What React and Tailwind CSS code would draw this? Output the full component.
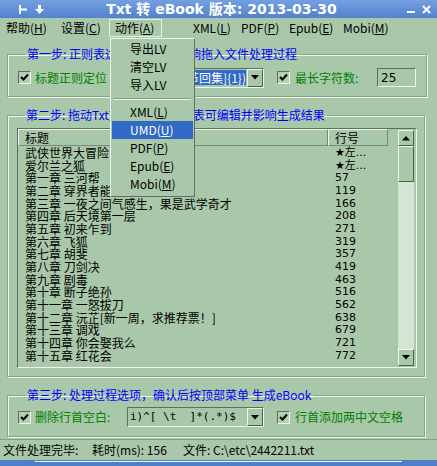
import React from 'react'

const rows = [
    ['武侠世界大冒险', '★左...'],
    ['爱尔兰之狐', '★左...'],
    ['第一章 三河帮', '57'],
    ['第二章 穿界者能力', '119'],
    ['第三章 一夜之间气感生，果是武学奇才', '166'],
    ['第四章 后天境第一层', '208'],
    ['第五章 初来乍到', '271'],
    ['第六章 飞狐', '319'],
    ['第七章 胡斐', '357'],
    ['第八章 刀剑决', '419'],
    ['第九章 剧毒', '463'],
    ['第十章 断子绝孙', '516'],
    ['第十一章 一怒拔刀', '562'],
    ['第十二章 沅芷[新一周，求推荐票！]', '638'],
    ['第十三章 调戏', '679'],
    ['第十四章 你会娶我么', '721'],
    ['第十五章 红花会', '772'],
]

const Check = () => (
    <div className="w-[13px] h-[13px] shrink-0 border border-t-[#5f6f5f] border-l-[#5f6f5f] border-b-[#eef6ee] border-r-[#eef6ee] bg-[#b4cfb4] flex items-center justify-center">
        <svg width="9" height="9" viewBox="0 0 9 9">
            <path d="M1 4 L3.5 6.5 L8 1.5" stroke="#000" strokeWidth="2" fill="none" />
        </svg>
    </div>
)

const DropButton = () => (
    <div className="w-[16px] h-full shrink-0 border border-t-[#eef6ee] border-l-[#eef6ee] border-b-[#4f5f4f] border-r-[#4f5f4f] bg-[#a9c8a9] flex items-center justify-center">
        <svg width="8" height="5" viewBox="0 0 8 5"><path d="M0 0 H8 L4 4.5 Z" fill="#000" /></svg>
    </div>
)

const groupCls = "mx-[7px] w-[418px] border border-[#86a686] shadow-[1px_1px_0_#eef6ee,inset_1px_1px_0_#eef6ee]"
const legendCls = "ml-[7px] px-[2px] text-[#0000ff] leading-[14px]"

const App = () => {
    return (
        <div className="w-[437px] h-[466px] bg-[#a9c8a9] flex flex-col relative overflow-hidden text-[12px] text-black font-['Noto_Sans_CJK_SC',sans-serif]">
            {/* title bar */}
            <div className="h-[18px] shrink-0 flex items-center bg-gradient-to-b from-[#74a0e0] to-[#5282cc] text-white">
                <div className="w-[60px] flex items-center gap-[7px] pl-[19px]">
                    <svg width="9" height="9" viewBox="0 0 9 9"><path d="M1 0 V9 M1 4.5 H8" stroke="#fff" strokeWidth="2" /></svg>
                    <svg width="9" height="9" viewBox="0 0 9 9"><path d="M3 0 H6 V4 H9 L4.5 9 L0 4 H3 Z" fill="#fff" /></svg>
                </div>
                <div className="flex-1 text-center pl-[6px] font-bold text-[14px] leading-[18px] font-['DejaVu_Sans','Noto_Sans_CJK_SC',sans-serif]">Txt 转 eBook 版本: 2013-03-30</div>
                <div className="w-[60px] flex items-center justify-end gap-[7px] pr-[6px]">
                    <div className="w-[8px] h-[2px] bg-white mt-[6px]" />
                    <svg width="9" height="9" viewBox="0 0 9 9"><path d="M1 1 L8 8 M8 1 L1 8" stroke="#fff" strokeWidth="2" /></svg>
                </div>
            </div>

            {/* menu bar */}
            <div className="h-[20px] shrink-0 flex items-center pl-[6px] leading-[16px]">
                <span className="w-[55px]">帮助(<u>H</u>)</span>
                <span className="w-[48px]">设置(<u>C</u>)</span>
                <span className="w-[53px] h-[18px] pl-[5px] border border-[#e4eee4] flex items-center">动作(<u>A</u>)</span>
                <span className="w-[31px]" />
                <span className="w-[48px]">XML(<u>L</u>)</span>
                <span className="w-[48px]">PDF(<u>P</u>)</span>
                <span className="w-[54px]">Epub(<u>E</u>)</span>
                <span>Mobi(<u>M</u>)</span>
            </div>

            {/* step 1 */}
            <fieldset className={groupCls + " mt-[9px] px-[10px] pt-[7px] pb-[9px]"}>
                <legend className={legendCls}>第一步: 正则表达式，设置将影响拖入文件处理过程</legend>
                <div className="h-[19px] flex items-center">
                    <Check />
                    <span className="ml-[4px] w-[92px] text-[#008000]">标题正则定位</span>
                    <div className="w-[137px] h-[20px] flex border border-t-[#5f6f5f] border-l-[#5f6f5f] border-b-[#eef6ee] border-r-[#eef6ee]">
                        <div className="flex-1 overflow-hidden flex justify-end items-center pr-[1px]">
                            <span className="bg-[#316ac5] text-white whitespace-nowrap leading-[15px]">^(第.{"{1,5}"}[章节回集]{"{1}"})</span>
                        </div>
                        <DropButton />
                    </div>
                    <div className="ml-[13px]"><Check /></div>
                    <span className="ml-[5px] w-[82px] text-[#008000]">最长字符数:</span>
                    <div className="w-[39px] h-[19px] pl-[3px] flex items-center border border-t-[#5f6f5f] border-l-[#5f6f5f] border-b-[#eef6ee] border-r-[#eef6ee] font-['DejaVu_Sans',sans-serif]">25</div>
                </div>
            </fieldset>

            {/* step 2 */}
            <fieldset className={groupCls + " mt-[11px] pl-[9px] pr-[7px] pt-[6px] pb-[8px]"}>
                <legend className={legendCls}>第二步: 拖动Txt文件到列表，列表可编辑并影响生成结果</legend>
                <div className="h-[240px] flex border border-t-[#5f6f5f] border-l-[#5f6f5f] border-b-[#eef6ee] border-r-[#eef6ee]">
                    <div className="w-[370px] flex flex-col">
                        <div className="h-[17px] flex leading-[15px]">
                            <div className="w-[310px] pl-[6px] border border-t-[#eef6ee] border-l-[#eef6ee] border-b-[#6f8f6f] border-r-[#6f8f6f]">标题</div>
                            <div className="flex-1 pl-[6px] border border-t-[#eef6ee] border-l-[#eef6ee] border-b-[#6f8f6f] border-r-[#6f8f6f]">行号</div>
                        </div>
                        <div className="flex flex-col">
                            {rows.map(([t, n]) => (
                                <div key={t} className="h-[12.7px] flex items-center leading-[13px] whitespace-nowrap">
                                    <div className="w-[310px] pl-[7px]">{t}</div>
                                    <div className="pl-[7px] font-['DejaVu_Sans','Noto_Sans_CJK_SC',sans-serif] text-[11px]">{n}</div>
                                </div>
                            ))}
                        </div>
                    </div>
                    <div className="flex-1" />
                    <div className="w-[16px] mr-[2px] my-[1px] flex flex-col">
                        <div className="h-[16px] border border-t-[#eef6ee] border-l-[#eef6ee] border-b-[#4f5f4f] border-r-[#4f5f4f] flex items-center justify-center">
                            <svg width="8" height="5" viewBox="0 0 8 5"><path d="M0 4.5 H8 L4 0 Z" fill="#000" /></svg>
                        </div>
                        <div className="h-[36px] border border-t-[#eef6ee] border-l-[#eef6ee] border-b-[#4f5f4f] border-r-[#4f5f4f]" />
                        <div className="flex-1 bg-[#d6e4d6]" />
                        <div className="h-[17px] border border-t-[#eef6ee] border-l-[#eef6ee] border-b-[#4f5f4f] border-r-[#4f5f4f] flex items-center justify-center">
                            <svg width="8" height="5" viewBox="0 0 8 5"><path d="M0 0 H8 L4 4.5 Z" fill="#000" /></svg>
                        </div>
                    </div>
                </div>
            </fieldset>

            {/* step 3 */}
            <fieldset className={groupCls + " mt-[11px] px-[10px] pt-[5px] pb-[9px]"}>
                <legend className={legendCls}>第三步: 处理过程选项，确认后按顶部菜单 生成eBook</legend>
                <div className="h-[20px] flex items-center">
                    <Check />
                    <span className="ml-[4px] w-[92px] text-[#008000]">删除行首空白:</span>
                    <div className="w-[137px] h-[20px] flex border border-t-[#5f6f5f] border-l-[#5f6f5f] border-b-[#eef6ee] border-r-[#eef6ee]">
                        <div className="flex-1 overflow-hidden flex items-center pl-[2px] whitespace-pre font-['DejaVu_Sans_Mono',monospace] text-[11px]">{"i)^[ \\t  ]*(.*)$"}</div>
                        <DropButton />
                    </div>
                    <div className="ml-[13px]"><Check /></div>
                    <span className="ml-[5px] text-[#008000]">行首添加两中文空格</span>
                </div>
            </fieldset>

            {/* status bar */}
            <div className="mt-[2px] h-[21px] shrink-0 flex items-center pl-[3px] border-t border-[#7f9f7f] whitespace-pre">
                <span className="w-[89px]">文件处理完毕:</span>
                <span className="w-[91px]">耗时(ms): 156</span>
                <span>文件: {"C:\\etc\\2442211.txt"}</span>
            </div>
            <div className="mt-auto h-[6px] shrink-0 bg-[#4f7fc9] flex items-start">
                <div className="ml-[35px] w-[367px] h-[1px] mt-[1px] bg-[#f4f8f4]" />
            </div>

            {/* open 动作 menu */}
            <div className="absolute left-[110px] top-[38px] w-[85px] h-[159px] bg-[#a9c8a9] border border-t-[#eef6ee] border-l-[#eef6ee] border-b-[#5f6f5f] border-r-[#5f6f5f] py-[1px] px-[1px] flex flex-col leading-[18px]">
                <div className="h-[18px] pl-[18px]">导出LV</div>
                <div className="h-[18px] pl-[18px]">清空LV</div>
                <div className="h-[18px] pl-[18px]">导入LV</div>
                <div className="h-[9px] flex items-center px-[2px]">
                    <div className="w-full h-[2px] border-t border-[#7f9f7f] border-b border-b-[#eef6ee]" />
                </div>
                <div className="h-[18px] pl-[18px]">XML(<u>L</u>)</div>
                <div className="h-[18px] pl-[18px] bg-[#316ac5] text-white">UMD(<u>U</u>)</div>
                <div className="h-[18px] pl-[18px]">PDF(<u>P</u>)</div>
                <div className="h-[18px] pl-[18px]">Epub(<u>E</u>)</div>
                <div className="h-[18px] pl-[18px]">Mobi(<u>M</u>)</div>
            </div>
        </div>
    )
}

export default App
